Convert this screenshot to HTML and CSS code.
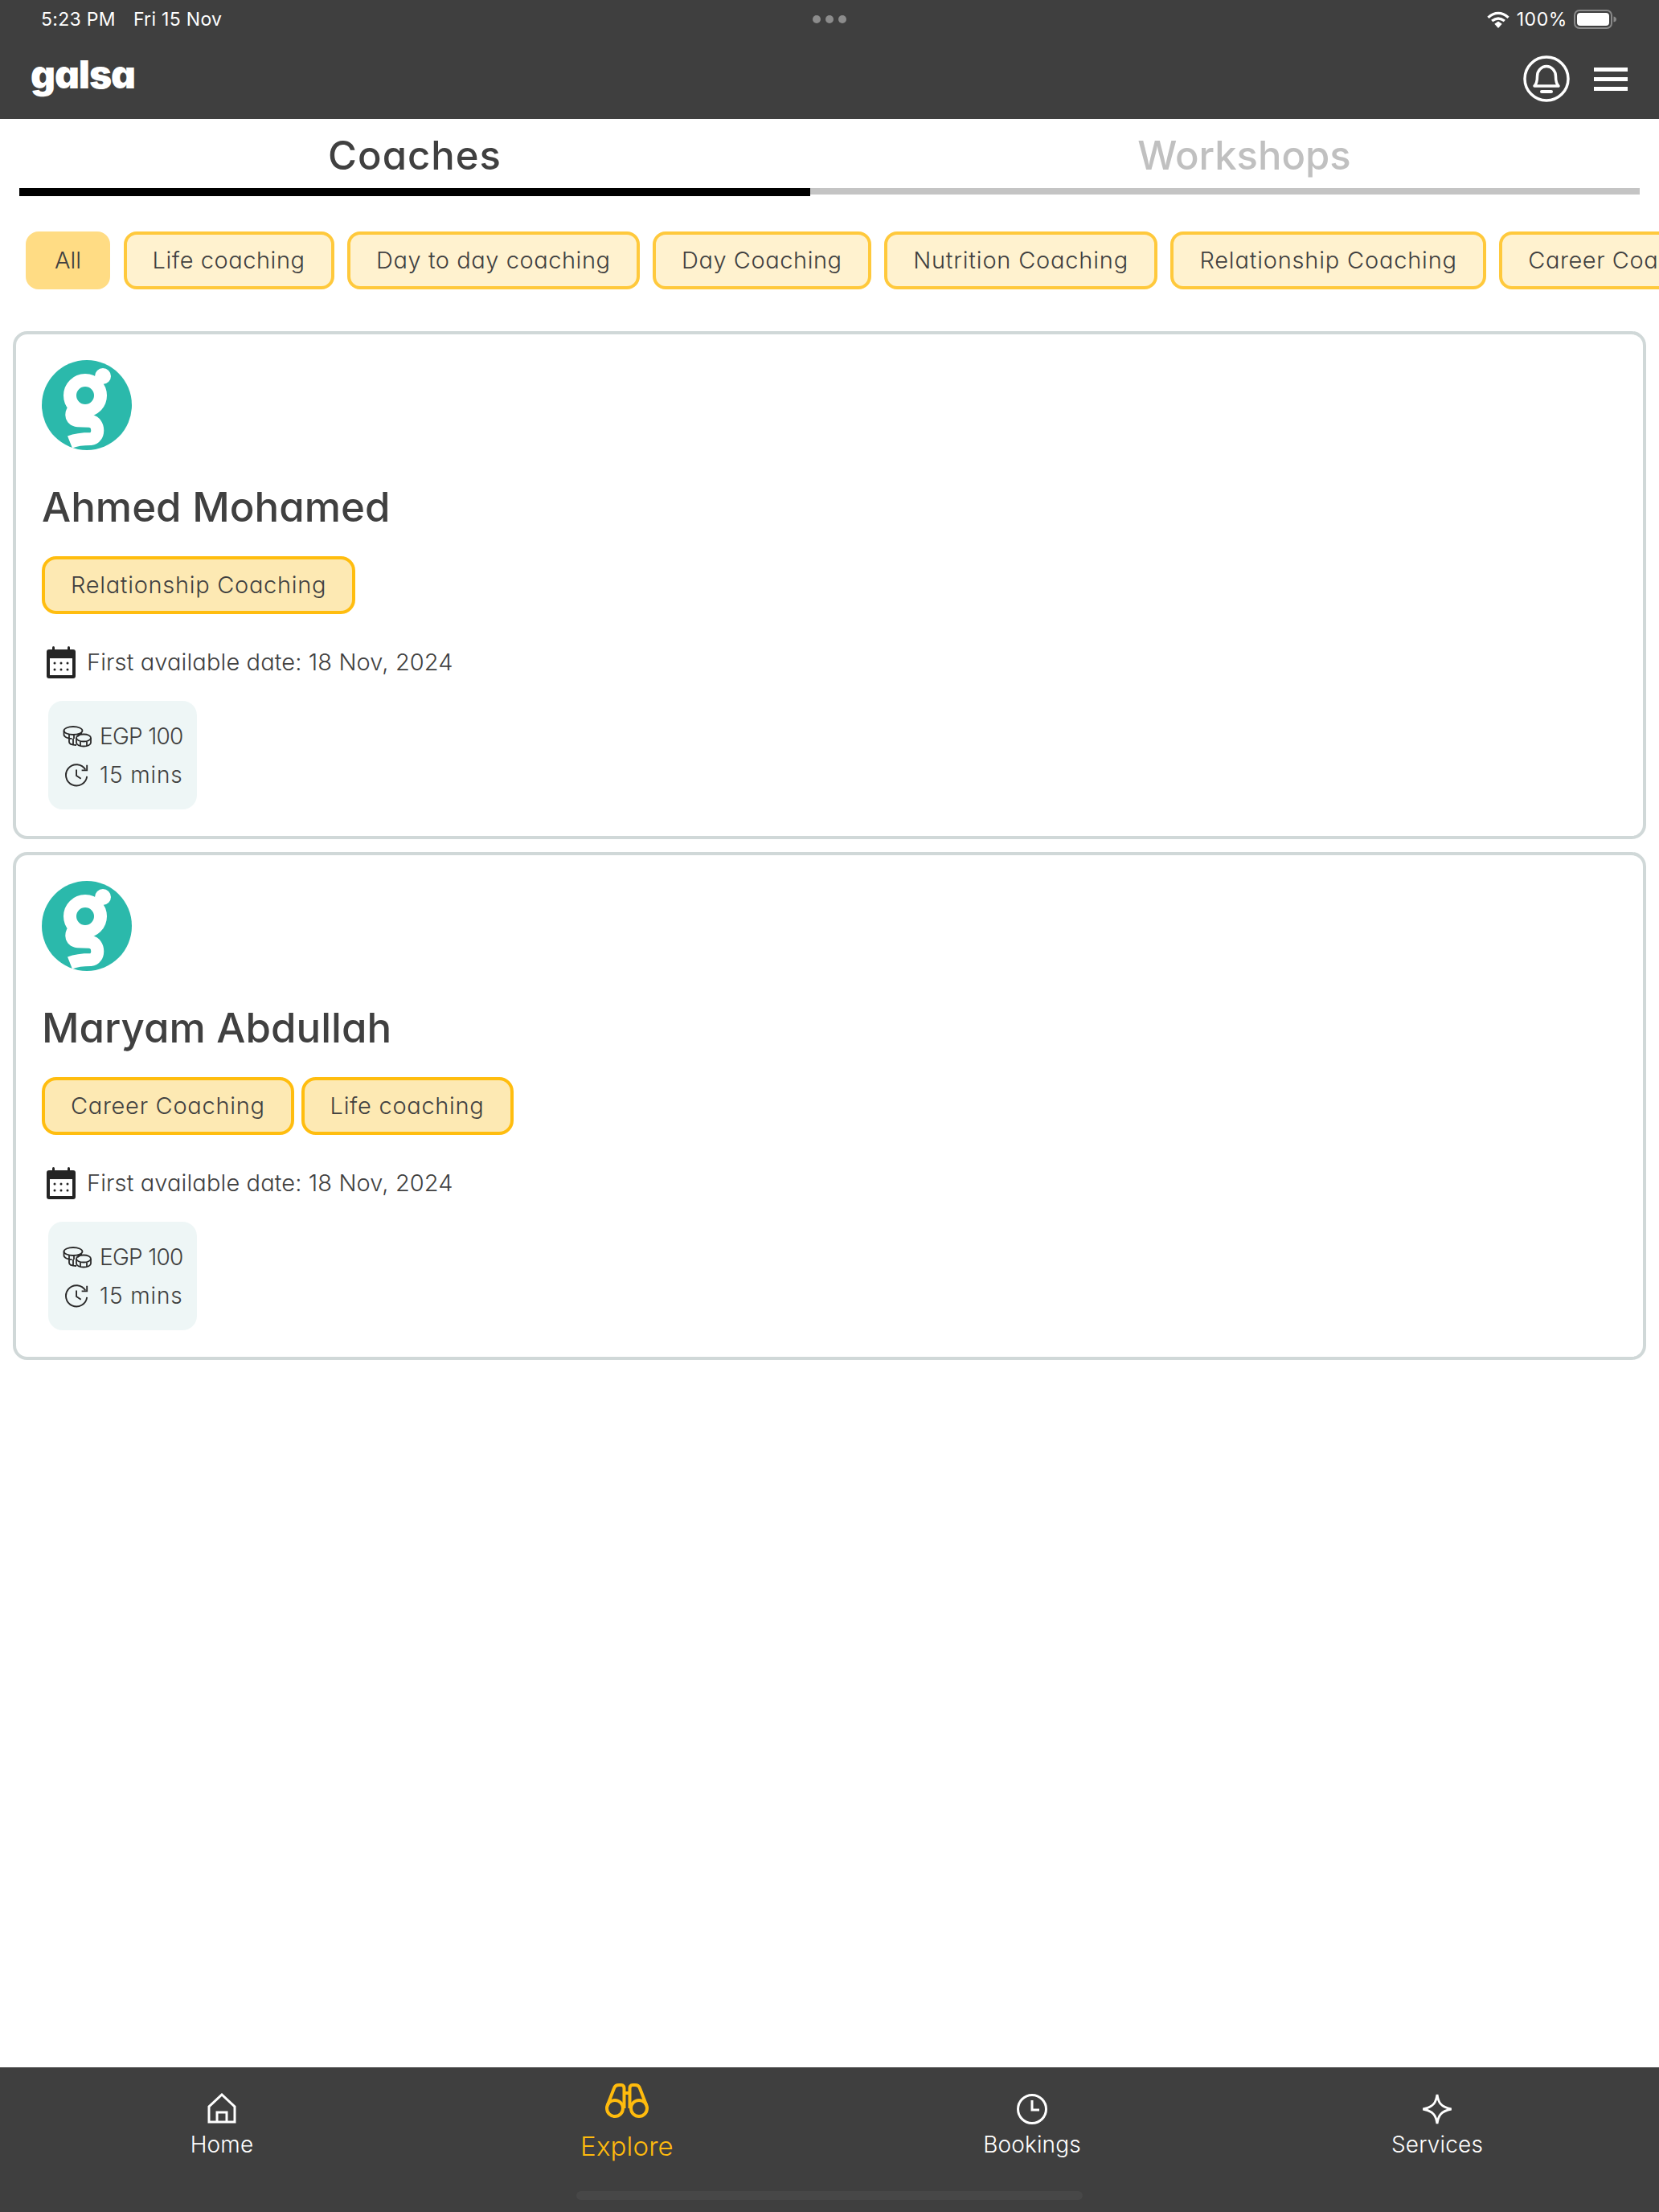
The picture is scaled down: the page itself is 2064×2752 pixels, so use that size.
FILE: index.html
```html
<!DOCTYPE html>
<html lang="en">
<head>
<meta charset="utf-8">
<title>galsa</title>
<link rel="stylesheet" href="styles.css">
</head>
<body>
<div class="app">
  <header class="header">
    <div class="status">
      <div class="status-left"><span class="time">5:23 PM</span><span>Fri 15 Nov</span></div>
      <div class="status-dots"><i></i><i></i><i></i></div>
      <div class="status-right">
        <svg class="wifi" viewBox="0 0 28 22"><path d="M2 8.5C9.5 1.5 18.500 1.500 26 8.500" fill="none" stroke="#fff" stroke-width="3.2"/><path d="M6.500 12.500C11.500 8.500 16.500 8.500 21.500 12.500" fill="none" stroke="#fff" stroke-width="3.2"/><path d="M9.500 16 14 12.800 18.500 16 14 21z" fill="#fff"/></svg>
        <span class="pct">100%</span>
        <svg class="battery" viewBox="0 0 54 24"><rect x="1" y="1" width="46" height="22" rx="6" fill="none" stroke="#8a8a8a" stroke-width="2"/><rect x="4" y="4" width="40" height="16" rx="4" fill="#fff"/><path d="M49.500 8.500C52 9 53 10.500 53 12S52 15 49.500 15.500z" fill="#8a8a8a"/></svg>
      </div>
    </div>
    <div class="topbar">
      <span class="logo">galsa</span>
      <div class="top-actions">
        <svg class="bell" viewBox="0 0 64 64" fill="none" stroke="#fff"><circle cx="32" cy="32" r="27" stroke-width="3.500"/><path d="M17 41c3-3 3.500-6 3.500-12a11.500 12.500 0 0 1 23 0c0 6 .5 9 3.500 12z" stroke-width="3.500" stroke-linejoin="round"/><path d="M26 48h12" stroke-width="4" stroke-linecap="round"/></svg>
        <div class="burger"><i></i><i></i><i></i></div>
      </div>
    </div>
  </header>

  <section class="tabs">
    <div class="tab-labels"><div class="tab-label active">Coaches</div><div class="tab-label">Workshops</div></div>
    <div class="tab-bar"><div class="tab-bar-on"></div><div class="tab-bar-off"></div></div>
  </section>

  <nav class="filters">
    <span class="filter filter-all">All</span>
    <span class="filter">Life coaching</span>
    <span class="filter">Day to day coaching</span>
    <span class="filter">Day Coaching</span>
    <span class="filter filter-wide">Nutrition Coaching</span>
    <span class="filter filter-wide">Relationship Coaching</span>
    <span class="filter">Career Coaching</span>
  </nav>

  <main class="cards">
    <article class="card">
      <svg class="avatar" viewBox="0 0 112 112"><use href="#g-mark"/></svg>
      <h2 class="name">Ahmed Mohamed</h2>
      <div class="tags"><span class="tag">Relationship Coaching</span></div>
      <div class="date"><svg class="cal" viewBox="0 0 36 40"><use href="#cal-icon"/></svg><span class="date-text">First available date: 18 Nov, 2024</span></div>
      <div class="meta">
        <div class="meta-row"><svg class="meta-icon" viewBox="0 0 36 28"><use href="#coins-icon"/></svg><span class="price">EGP 100</span></div>
        <div class="meta-row"><svg class="meta-icon" viewBox="0 0 36 32"><use href="#timer-icon"/></svg><span class="duration">15 mins</span></div>
      </div>
    </article>
    <article class="card">
      <svg class="avatar" viewBox="0 0 112 112"><use href="#g-mark"/></svg>
      <h2 class="name">Maryam Abdullah</h2>
      <div class="tags"><span class="tag">Career Coaching</span><span class="tag">Life coaching</span></div>
      <div class="date"><svg class="cal" viewBox="0 0 36 40"><use href="#cal-icon"/></svg><span class="date-text">First available date: 18 Nov, 2024</span></div>
      <div class="meta">
        <div class="meta-row"><svg class="meta-icon" viewBox="0 0 36 28"><use href="#coins-icon"/></svg><span class="price">EGP 100</span></div>
        <div class="meta-row"><svg class="meta-icon" viewBox="0 0 36 32"><use href="#timer-icon"/></svg><span class="duration">15 mins</span></div>
      </div>
    </article>
  </main>

  <footer class="bottom">
    <div class="nav-item">
      <svg class="nav-icon" viewBox="0 0 40 40" fill="none" stroke="#fff" stroke-width="3"><path d="M4 36V17L20 2l16 15v19zM14 36V24h12v12"/></svg>
      <span class="nav-label">Home</span>
    </div>
    <div class="nav-item nav-active">
      <svg class="nav-icon-lg" viewBox="0 0 54 44" fill="none" stroke="#ffbb0d" stroke-width="4"><circle cx="12" cy="31" r="10"/><circle cx="42" cy="31" r="10"/><path d="M2.500 28 11 6c1-3 3-4 6-4h3c2.500 0 3.500 2 3.500 4v25M51.500 28 43 6c-1-3-3-4-6-4h-3c-2.500 0-3.500 2-3.500 4v25M23.500 12h7"/></svg>
      <span class="nav-label">Explore</span>
    </div>
    <div class="nav-item">
      <svg class="nav-icon" viewBox="0 0 40 40" fill="none" stroke="#fff" stroke-width="3"><circle cx="20" cy="20" r="17.500"/><path d="M20 9v12h9"/></svg>
      <span class="nav-label">Bookings</span>
    </div>
    <div class="nav-item">
      <svg class="nav-icon" viewBox="0 0 42 40" fill="none" stroke="#fff" stroke-width="3" stroke-linejoin="miter"><path d="M21 1c1.500 10 4 16 18.500 19C25 23 22.500 29 21 39 19.500 29 17 23 2.500 20 17 17 19.500 11 21 1z"/></svg>
      <span class="nav-label">Services</span>
    </div>
    <div class="home-indicator"></div>
  </footer>
</div>

<svg class="defs" aria-hidden="true">
  <defs>
    <clipPath id="g-clip"><circle cx="56" cy="56" r="56"/></clipPath>
    <g id="g-mark">
      <circle cx="56" cy="56" r="56" fill="#2bb9ab"/>
      <g clip-path="url(#g-clip)" fill="none" stroke="#fff" stroke-width="16" stroke-linecap="round">
        <circle cx="54" cy="44" r="19"/>
        <path d="M68 31 77 20" stroke-width="9"/>
        <path d="M42 60c-6 4-7 13 1 15 3 1 12 0 18 1 11 2 11 21 0 22-6 0-16 0-26 4" stroke-linecap="butt"/>
      </g>
      <circle cx="76" cy="20" r="10" fill="#fff"/>
    </g>
    <g id="cal-icon">
      <path d="M3 4h30a3 3 0 0 1 3 3v30a3 3 0 0 1-3 3H3a3 3 0 0 1-3-3V7a3 3 0 0 1 3-3z" fill="#242424"/>
      <rect x="7" y="0" width="3" height="6" rx="1.500" fill="#242424"/><rect x="26" y="0" width="3" height="6" rx="1.500" fill="#242424"/>
      <rect x="4" y="15" width="28" height="21" fill="#fff"/>
      <g fill="#242424"><circle cx="10" cy="21" r="1.500"/><circle cx="18" cy="21" r="1.500"/><circle cx="26" cy="21" r="1.500"/><circle cx="10" cy="29" r="1.500"/><circle cx="18" cy="29" r="1.500"/><circle cx="26" cy="29" r="1.500"/></g>
    </g>
    <g id="coins-icon" fill="none" stroke="#2a2a2a" stroke-width="1.800">
      <ellipse cx="13" cy="7" rx="11.500" ry="5"/>
      <path d="M1.500 7v5c0 2.500 4.500 5 10 5M24 10.500c-3 .5-5 2-5 4M8 11.500v5M14 12v5M20 11v3"/>
      <ellipse cx="26" cy="16" rx="9" ry="4.500"/>
      <path d="M17 16v6c0 2.500 4 4.500 9 4.500s9-2 9-4.500v-6M8 17v4c0 2 3 4 9 4M13 17v7M22 20.500v6M30 20.500v6"/>
    </g>
    <g id="timer-icon" fill="none" stroke="#2a2a2a" stroke-width="2">
      <path d="M29 9A14 14 0 1 0 31 18"/>
      <path d="M31 3v7h-7M17 9v8l6 4"/>
    </g>
  </defs>
</svg>
</body>
</html>
```
FILE: styles.css
```css
* { box-sizing: border-box; }
html, body { margin: 0; padding: 0; background: #fff; }
body {
  font-family: Inter, "Liberation Sans", sans-serif;
  font-feature-settings: "cv11" 1;
  color: #404040;
}
.app { width: 2064px; height: 2752px; display: flex; flex-direction: column; overflow: hidden; }
.defs { position: absolute; width: 0; height: 0; }

.header { height: 148px; background: #3f3f3f; color: #fff; flex: none; }
.status {
  height: 48px; display: grid; grid-template-columns: 1fr auto 1fr; align-items: center;
  padding: 0 52px 0 51px; font-size: 23px; font-feature-settings: normal;
}
.status-left { display: flex; gap: 22px; letter-spacing: .3px; }
.status-dots { display: flex; gap: 6px; }
.status-dots i { width: 10px; height: 10px; border-radius: 50%; background: #8c8c8c; }
.status-right { display: flex; justify-content: flex-end; align-items: center; }
.wifi { width: 30px; height: 23px; margin-right: 8px; }
.pct { margin-right: 8px; letter-spacing: .6px; }
.battery { width: 54px; height: 24px; }

.topbar { height: 100px; display: flex; justify-content: space-between; align-items: center; padding: 0 39px 0 38px; }
.logo { font-size: 48px; line-height: 64px; font-weight: 900; letter-spacing: -1.100px; color: #fff; margin-top: -10px; }
.top-actions { display: flex; align-items: center; gap: 27px; }
.bell { width: 64px; height: 64px; }
.burger { width: 42px; display: flex; flex-direction: column; gap: 7px; }
.burger i { height: 5px; background: #fff; display: block; }

.tabs { flex: none; height: 96px; }
.tab-labels { display: grid; grid-template-columns: 1fr 1fr; height: 86px; }
.tab-label { text-align: center; font-size: 49px; font-weight: 500; line-height: 91px; color: #c0c0c0; letter-spacing: 0; }
.tab-label.active { color: #404040; letter-spacing: 1px; }
.tab-bar { display: flex; align-items: flex-start; padding: 0 24px; }
.tab-bar-on { width: 984px; height: 10px; background: #000; }
.tab-bar-off { flex: 1; height: 8px; background: #c4c4c4; }

.filters { flex: none; display: flex; gap: 16.500px; margin-top: 44px; padding-left: 32px; white-space: nowrap; overflow: hidden; }
.filter {
  flex: none; height: 72px; line-height: 64px; padding: 0 32px; font-size: 29px; font-weight: 350; letter-spacing: .55px;
  background: #fff2cf; border: 4px solid #ffc93c; border-radius: 16px;
}
.filter-all { background: #ffdc84; border-color: #ffdc84; letter-spacing: 0; }
.filter-wide { letter-spacing: .8px; }

.cards { flex: 1; display: flex; flex-direction: column; gap: 16px; margin-top: 52px; padding: 0 16px; }
.card { height: 632px; border: 4px solid #d0d8d8; border-radius: 18px; padding: 32px; }
.avatar { display: block; width: 112px; height: 112px; }
.name { margin: 35px 0 0; font-size: 51px; line-height: 72px; font-weight: 550; color: #404040; }
.tags { display: flex; gap: 9px; margin-top: 25px; }
.tag {
  height: 72px; line-height: 64px; padding: 0 32px; font-size: 29px; font-weight: 350; letter-spacing: .7px;
  background: #fde9b3; border: 4px solid #ffbd0f; border-radius: 18px;
}
.date { display: flex; align-items: center; gap: 14px; margin: 40px 0 0 6px; height: 40px; font-size: 29px; font-weight: 350; letter-spacing: .12px; }
.date-text { margin-top: -2px; }
.cal { width: 36px; height: 40px; flex: none; }
.meta {
  display: inline-flex; flex-direction: column; margin: 28px 0 0 8px; padding: 20px 17px 19px 18px;
  background: #eef6f6; border-radius: 18px; font-size: 28px; font-weight: 350;
}
.meta-row { display: flex; align-items: center; gap: 10px; height: 48px; }
.meta-icon { width: 36px; height: 30px; flex: none; }
.price { letter-spacing: -.7px; }
.duration { letter-spacing: .9px; }

.bottom { flex: none; position: relative; height: 180px; background: #3f3f3f; padding: 0 24px; display: grid; grid-template-columns: repeat(4, 504px); }
.nav-item { display: flex; flex-direction: column; align-items: center; padding-top: 32px; color: #fff; font-weight: 300; }
.nav-icon { width: 40px; height: 40px; }
.nav-icon-lg { width: 54px; height: 44px; }
.nav-label { font-size: 28px; line-height: 48px; letter-spacing: .15px; }
.nav-active { padding-top: 20px; color: #ffbb0d; }
.nav-active .nav-label { font-size: 33px; margin-top: 10px; }
.home-indicator { position: absolute; left: 717px; top: 154px; width: 630px; height: 11px; border-radius: 6px; background: #474747; }
```
